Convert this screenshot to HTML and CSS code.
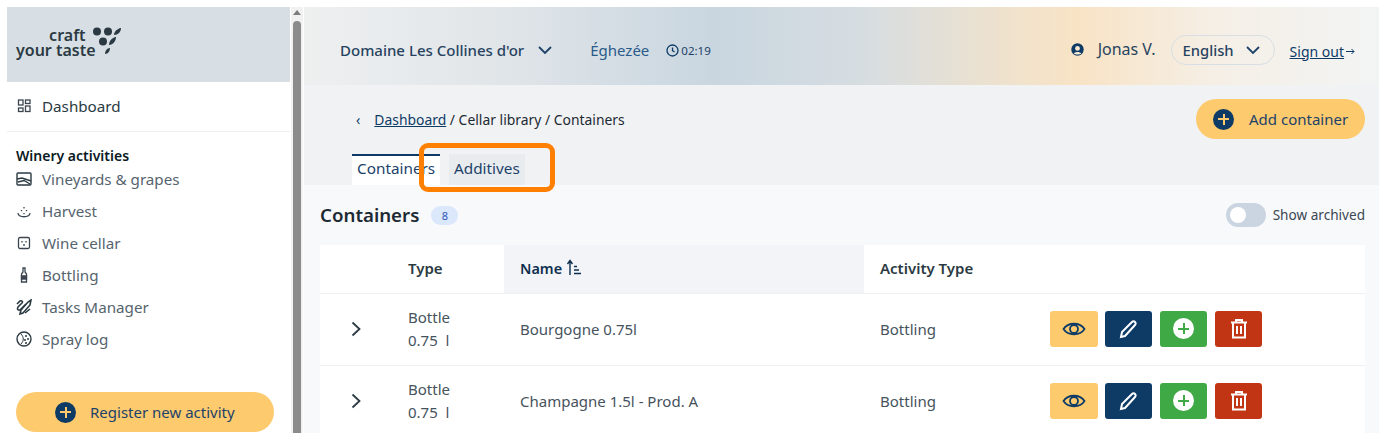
FILE: index.html
```html
<!DOCTYPE html>
<html lang="en">
<head>
<meta charset="UTF-8">
<title>Containers</title>
<link rel="stylesheet" href="styles.css">
</head>
<body>
<div class="app">
  <aside class="sidebar">
    <div class="logo">
      <div class="logo-text"><span class="logo-craft">craft</span><span>your taste</span></div>
      <svg class="logo-mark" width="30" height="28" viewBox="0 0 30 28">
        <circle cx="5" cy="4.5" r="4" fill="#2b3a42"/>
        <circle cx="16" cy="4.5" r="4" fill="#2b3a42"/>
        <path d="M22 8 C22 5 25 1.500 29 1 C29 5 26 8 22 8Z" fill="#2b3a42"/>
        <circle cx="11" cy="14.500" r="4" fill="#2b3a42"/>
        <path d="M17 18 C17 14 20 10.500 24 10 C24 14 21 18 17 18Z" fill="#2b3a42"/>
        <path d="M13 27 C13 24 15 21 18 21 C18 24 16 27 13 27Z" fill="#2b3a42"/>
      </svg>
    </div>
    <a class="nav-item nav-top">
      <svg width="14" height="14" viewBox="0 0 14 14" fill="none" stroke="#3c4650" stroke-width="1.3"><rect x="1.500" y="1" width="4.500" height="5"/><rect x="8.500" y="1" width="4.500" height="3.500"/><rect x="1.500" y="9" width="4.500" height="3.500"/><rect x="8.500" y="7" width="4.500" height="5.500"/></svg>
      Dashboard
    </a>
    <div class="nav-title">Winery activities</div>
    <a class="nav-item first">
      <svg width="16" height="14" viewBox="0 0 16 14" fill="none" stroke="#2b3a42" stroke-width="1.4"><rect x="1" y="1" width="14" height="12" rx="1"/><path d="M1 7 L6 6 L15 9 M2 10 L8 8.500 L14 12"/></svg>
      Vineyards &amp; grapes
    </a>
    <a class="nav-item">
      <svg width="14" height="14" viewBox="0 0 14 14" fill="none" stroke="#3c4650" stroke-width="1.300"><path d="M1 9 C1.500 14 12.500 14 13 9"/><path d="M4.500 6v1.200M9.500 6v1.200M7 3v1.500M7 9v1.200"/></svg>
      Harvest
    </a>
    <a class="nav-item">
      <svg width="14" height="14" viewBox="0 0 14 14" fill="none" stroke="#3c4650" stroke-width="1.3"><rect x="1.500" y="1.500" width="11" height="11" rx="1.500"/><path d="M5 5v1.500M9 5v1.500M7 8v2"/></svg>
      Wine cellar
    </a>
    <a class="nav-item">
      <svg width="14" height="16" viewBox="0 0 14 16" fill="none" stroke="#3c4650" stroke-width="1.300"><path d="M6 1h2v4l1.500 2v8h-5V7L6 5Z"/><path d="M4.500 9h5v3h-5Z" fill="#3c4650"/></svg>
      Bottling
    </a>
    <a class="nav-item">
      <svg width="16" height="16" viewBox="0 0 16 16" fill="none" stroke="#2b3a42" stroke-width="1.600"><path d="M1 5 L4 2 C6 1 7 3 6 4 L2 8 C0.500 11 3 12 5 10 L10 5"/><path d="M4 15 L7 14 L14 6 L15 1 L12 3 L5 11 Z"/><path d="M9 14 L14 10"/></svg>
      Tasks Manager
    </a>
    <a class="nav-item">
      <svg width="16" height="16" viewBox="0 0 16 16" fill="none" stroke="#2b3a42" stroke-width="1.400"><circle cx="8" cy="8" r="7"/><path d="M5 3 C8 6 8 10 5 13" stroke-width="1"/><circle cx="10" cy="5" r="1" fill="#2b3a42" stroke="none"/><circle cx="12" cy="8" r="1" fill="#2b3a42" stroke="none"/><circle cx="9" cy="9" r="1" fill="#2b3a42" stroke="none"/><circle cx="10" cy="12" r="1" fill="#2b3a42" stroke="none"/></svg>
      Spray log
    </a>
    <button class="pill register">
      <span class="plus-dot"></span>
      Register new activity
    </button>
  </aside>

  <div class="scrollbar"><span class="scroll-arrow"></span><span class="scroll-thumb"></span></div>

  <main class="main">
    <header class="topbar">
      <div class="domain">Domaine Les Collines d'or
        <svg width="14" height="9" viewBox="0 0 14 9" fill="none" stroke="#1c4269" stroke-width="1.8"><path d="M1 1 L7 7 L13 1"/></svg>
      </div>
      <div class="place">Éghezée</div>
      <div class="clock">
        <svg width="13" height="13" viewBox="0 0 13 13" fill="none" stroke="#0d3b66" stroke-width="1.3"><circle cx="6.500" cy="6.500" r="5.500"/><path d="M6.500 3.500v3.200l2 1.200"/></svg>
        02:19
      </div>
      <div class="user">
        <svg width="13" height="13" viewBox="0 0 13 13"><circle cx="6.500" cy="6.500" r="6.200" fill="#0d3b66"/><circle cx="6.500" cy="5.400" r="2.400" fill="#f8e8d2"/><path d="M2.800 10.400 C4 8.400 9 8.400 10.200 10.400 C8.500 11.800 4.500 11.800 2.800 10.400Z" fill="#f8e8d2"/></svg>
        Jonas V.
      </div>
      <div class="lang">English
        <svg width="14" height="9" viewBox="0 0 14 9" fill="none" stroke="#1c4269" stroke-width="1.8"><path d="M1 1 L7 7 L13 1"/></svg>
      </div>
      <div class="signout"><u>Sign out</u><svg class="out-arrow" width="9" height="7" viewBox="0 0 9 7" fill="none" stroke="#0d3b66" stroke-width="1"><path d="M0 3.500h8M5.500 1 L8 3.500 L5.500 6"/></svg></div>
    </header>

    <section class="head">
      <div class="crumb-row">
        <div class="crumbs"><span class="crumb-back">‹</span><u>Dashboard</u> / Cellar library / Containers</div>
        <button class="pill add"><span class="plus-dot"></span>Add container</button>
      </div>
      <div class="tabs">
        <div class="tab active">Containers</div>
        <div class="tab other">Additives</div>
      </div>
    </section>

    <section class="body">
      <div class="title-row">
        <h2>Containers</h2>
        <span class="count">8</span>
        <div class="archived"><span class="switch"><span class="knob"></span></span><span class="archived-label">Show archived</span></div>
      </div>
      <table class="grid">
        <colgroup><col class="c-exp"><col class="c-type"><col class="c-name"><col class="c-act"><col></colgroup>
        <thead>
          <tr>
            <th></th>
            <th>Type</th>
            <th class="sorted">Name
              <svg width="16" height="17" viewBox="0 0 16 17" fill="none" stroke="#0f2f4f" stroke-width="1.400"><path d="M4 16V2M1.500 5 L4 1.500 L6.500 5"/><path d="M8 7.500h3M8 11h5M8 14.500h7"/></svg>
            </th>
            <th>Activity Type</th>
            <th></th>
          </tr>
        </thead>
        <tbody>
          <tr>
            <td><svg class="expand" width="10" height="16" viewBox="0 0 10 16" fill="none" stroke="#2b3a42" stroke-width="1.8"><path d="M1.500 1.500 L8.500 8 L1.500 14.500"/></svg></td>
            <td class="type">Bottle<br>0.75&nbsp; l</td>
            <td>Bourgogne 0.75l</td>
            <td>Bottling</td>
            <td>
              <div class="actions">
                <button class="act view"><svg width="24" height="16" viewBox="0 0 24 16" fill="none" stroke="#0d3b66" stroke-width="1.8"><path d="M1.500 8 C6 1 18 1 22.500 8 C18 15 6 15 1.500 8Z"/><circle cx="12" cy="8" r="4"/></svg></button>
                <button class="act edit"><svg width="20" height="20" viewBox="0 0 20 20" fill="none" stroke="#fff" stroke-width="2"><path d="M2 18 L3 13 L13 3 C15 1 18 4 16 6 L6 17 Z"/></svg></button>
                <button class="act plus"><span class="white-dot"></span></button>
                <button class="act del"><svg width="16" height="20" viewBox="0 0 16 20" fill="none" stroke="#fff" stroke-width="2"><path d="M0 3.500h16M5 3V1h6v2"/><path d="M2 4v14.500h12V4"/><path d="M6 7v8M10 7v8"/></svg></button>
              </div>
            </td>
          </tr>
          <tr>
            <td><svg class="expand" width="10" height="16" viewBox="0 0 10 16" fill="none" stroke="#2b3a42" stroke-width="1.8"><path d="M1.500 1.500 L8.500 8 L1.500 14.500"/></svg></td>
            <td class="type">Bottle<br>0.75&nbsp; l</td>
            <td>Champagne 1.5l - Prod. A</td>
            <td>Bottling</td>
            <td>
              <div class="actions">
                <button class="act view"><svg width="24" height="16" viewBox="0 0 24 16" fill="none" stroke="#0d3b66" stroke-width="1.8"><path d="M1.500 8 C6 1 18 1 22.500 8 C18 15 6 15 1.500 8Z"/><circle cx="12" cy="8" r="4"/></svg></button>
                <button class="act edit"><svg width="20" height="20" viewBox="0 0 20 20" fill="none" stroke="#fff" stroke-width="2"><path d="M2 18 L3 13 L13 3 C15 1 18 4 16 6 L6 17 Z"/></svg></button>
                <button class="act plus"><span class="white-dot"></span></button>
                <button class="act del"><svg width="16" height="20" viewBox="0 0 16 20" fill="none" stroke="#fff" stroke-width="2"><path d="M0 3.500h16M5 3V1h6v2"/><path d="M2 4v14.500h12V4"/><path d="M6 7v8M10 7v8"/></svg></button>
              </div>
            </td>
          </tr>
        </tbody>
      </table>
    </section>

    <!-- highlight drawn over the tabs -->
    <div class="highlight"></div>
  </main>
</div>
</body>
</html>
```

FILE: styles.css
```css
html, body {
  margin: 0;
  padding: 0;
  background: #fff;
  overflow: hidden;
}
body {
  font-family: "Noto Sans", sans-serif;
  color: #2b3a42;
  font-size: 15px;
}
.app {
  display: flex;
  height: 426px;
  margin: 7px 7px 8px;
  overflow: hidden;
}

/* sidebar */
.sidebar {
  width: 283px;
  flex: none;
  display: flex;
  flex-direction: column;
  background: #fff;
}
.logo {
  height: 75px;
  flex: none;
  background: #d7dfe5;
  display: flex;
  align-items: flex-start;
  padding: 21px 0 0 9px;
  box-sizing: border-box;
}
.logo-text {
  display: flex;
  flex-direction: column;
  align-items: flex-end;
  font-size: 16px;
  font-weight: 600;
  line-height: 15px;
  color: #2b3a42;
}
.logo-craft {
  margin-right: 10px;
}
.logo-mark {
  margin: -1px 0 0 -4px;
}
.nav-item {
  display: flex;
  align-items: center;
  height: 32px;
  padding-left: 9px;
  color: #56646e;
  font-size: 15.2px;
}
.nav-item svg {
  flex: none;
  width: 16px;
  padding-right: 10px;
}
.nav-top {
  height: 47px;
  padding-bottom: 2px;
  color: #2b3a42;
  border-bottom: 1px solid #eceef0;
}
.nav-title {
  margin: 15px 0 0 9px;
  font-size: 14px;
  line-height: 17px;
  font-weight: 600;
  color: #0b1a24;
}
.nav-item.first {
  margin-top: 3px;
  height: 24px;
  margin-bottom: 4px;
}
.pill {
  display: flex;
  align-items: center;
  border: none;
  border-radius: 20px;
  background: #fdca6e;
  color: #1c4269;
  font-family: inherit;
  font-size: 15px;
  height: 40px;
}
.register {
  width: 258px;
  margin: 37px 0 0 9px;
  padding-left: 39px;
  flex: none;
}
.register .plus-dot {
  margin-right: 14px;
}
.plus-dot {
  width: 21px;
  height: 21px;
  border-radius: 50%;
  background: #0d3b66;
  margin-right: 15px;
  flex: none;
  position: relative;
}
.plus-dot::before, .plus-dot::after {
  content: "";
  position: absolute;
  background: #fdca6e;
  left: 5px;
  top: 9.5px;
  width: 11px;
  height: 2px;
}
.plus-dot::after {
  left: 9.5px;
  top: 5px;
  width: 2px;
  height: 11px;
}

/* the browser scrollbar as captured */
.scrollbar {
  width: 12px;
  margin-left: 1px;
  flex: none;
  background: #f1f1f1;
  display: flex;
  flex-direction: column;
  align-items: center;
}
.scroll-arrow {
  margin-top: 3px;
  border: 4px solid transparent;
  border-top: 0;
  border-bottom: 5px solid #7d7d7d;
}
.scroll-thumb {
  margin-top: 6px;
  width: 8px;
  flex: 1;
  border-radius: 4px 4px 0 0;
  background: #8b8b8b;
}

/* main */
.main {
  width: 1075px;
  margin-left: 1px;
  flex: none;
  position: relative;
  display: flex;
  flex-direction: column;
}
.topbar {
  height: 78px;
  flex: none;
  box-sizing: border-box;
  padding: 8px 0 0 36px;
  display: flex;
  align-items: center;
  background: linear-gradient(90deg, #eef0f0 0%, #dfe4e8 20%, #c9d6e0 38%, #d6dde1 52%, #f0e2cc 66%, #f8e3c5 72%, #f5efe6 85%, #f2f4f4 100%);
  color: #1c4269;
}
.domain {
  display: flex;
  align-items: center;
  gap: 14px;
  font-size: 15px;
  font-weight: 500;
  color: #27435f;
}
.place {
  margin-left: 38px;
  font-size: 15px;
  color: #2a5a88;
}
.clock {
  display: flex;
  align-items: center;
  gap: 2px;
  margin-left: 17px;
  font-size: 11.5px;
  color: #1c4269;
}
.user {
  display: flex;
  align-items: center;
  gap: 14px;
  margin-left: auto;
  margin-top: -2px;
  font-size: 16px;
  color: #27435f;
}
.lang {
  display: flex;
  align-items: center;
  gap: 12px;
  box-sizing: border-box;
  height: 30px;
  margin-left: 16px;
  padding: 0 14px 0 10px;
  border: 1px solid #d7dee4;
  border-radius: 15px;
  font-size: 14.8px;
  font-weight: 500;
  color: #27435f;
}
.signout {
  display: flex;
  align-items: center;
  gap: 2px;
  margin: 2px 24px 0 15px;
  font-size: 14px;
  color: #0d3b66;
}
.head {
  height: 100px;
  flex: none;
  box-sizing: border-box;
  background: #f1f2f3;
  padding: 14px 14px 0 48px;
  display: flex;
  flex-direction: column;
}
.crumb-row {
  display: flex;
  align-items: center;
  justify-content: space-between;
}
.crumbs {
  font-size: 13.9px;
  color: #1d2a33;
}
.crumbs u {
  color: #0d3b66;
}
.crumb-back {
  margin: 0 14px 0 4px;
  color: #0d3b66;
}
.add {
  width: 169px;
  padding-left: 17px;
}
.tabs {
  display: flex;
  gap: 9px;
  margin-top: 15px;
  flex: 1;
}
.tab {
  box-sizing: border-box;
  height: 31px;
  padding: 4px 5px;
  font-size: 15.3px;
  color: #1c4269;
}
.tab.active {
  width: 88px;
  background: #fff;
  border-top: 2px solid #0d3b66;
  padding-top: 2px;
}
.tab.other {
  width: 76px;
  background: #e9ecef;
}
.body {
  flex: 1;
  background: #f8f9fb;
  padding: 0 14px 0 16px;
}
.title-row {
  height: 60px;
  display: flex;
  align-items: center;
}
.title-row h2 {
  margin: -2px 0 0;
  font-size: 18.7px;
  font-weight: 600;
  color: #1d2a33;
}
.count {
  margin-left: 12px;
  width: 27px;
  height: 19px;
  border-radius: 10px;
  background: #dbe7fb;
  color: #2f55b5;
  font-size: 11px;
  line-height: 19px;
  text-align: center;
}
.archived {
  margin-left: auto;
  display: flex;
  align-items: center;
  gap: 7px;
  font-size: 13.6px;
  color: #3b4853;
}
.archived-label {
  margin-bottom: 2px;
}
.switch {
  width: 40px;
  height: 24px;
  border-radius: 12px;
  background: #cbd5e2;
  display: flex;
  align-items: center;
  padding-left: 4px;
  box-sizing: border-box;
}
.knob {
  width: 16px;
  height: 16px;
  border-radius: 50%;
  background: #fff;
}
.grid {
  width: 1045px;
  table-layout: fixed;
  border-collapse: collapse;
  background: #fff;
}
.c-exp { width: 72px; }
.c-type { width: 112px; }
.c-name { width: 360px; }
.c-act { width: 170px; }
.grid th {
  height: 46px;
  padding: 0 0 2px 16px;
  text-align: left;
  font-size: 15px;
  font-weight: 600;
  color: #2b3a42;
  border-bottom: 1px solid #eef0f3;
}
.grid th.sorted {
  background: #f2f4f8;
  color: #0f2f4f;
  font-size: 14.4px;
}
.grid th svg {
  vertical-align: -2px;
}
.grid td {
  height: 69px;
  padding: 0 0 2px 16px;
  font-size: 15px;
  color: #46535d;
  border-bottom: 1px solid #eef0f3;
}
.grid td.type {
  line-height: 23px;
}
.expand {
  display: block;
  margin-left: 15px;
}
.actions {
  display: flex;
  gap: 8px;
}
.act {
  width: 47px;
  height: 36px;
  border: none;
  border-radius: 3px;
  padding: 0;
  display: flex;
  align-items: center;
  justify-content: center;
}
.act.view { width: 48px; margin-right: -1px; background: #fdca6e; }
.act.edit { background: #0d3b66; }
.act.plus { background: #3fa945; }
.act.del { background: #c13514; }
.white-dot {
  width: 21px;
  height: 21px;
  border-radius: 50%;
  background: #fff;
  position: relative;
}
.white-dot::before, .white-dot::after {
  content: "";
  position: absolute;
  background: #3fa945;
  left: 5px;
  top: 9.5px;
  width: 11px;
  height: 2px;
}
.white-dot::after {
  left: 9.5px;
  top: 5px;
  width: 2px;
  height: 11px;
}
.highlight {
  position: absolute;
  left: 115px;
  top: 136px;
  width: 136px;
  height: 49px;
  box-sizing: border-box;
  border: 5px solid #ff8000;
  border-radius: 9px;
}
```
